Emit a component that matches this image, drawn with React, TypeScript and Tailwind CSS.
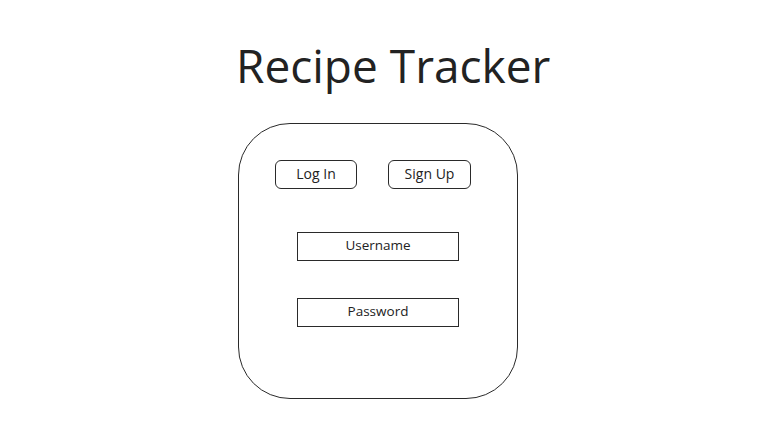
import React from "react";

export default function App() {
  return (
    <div className="w-[772px] h-[435px] bg-white flex flex-col items-start font-['Open_Sans',sans-serif] text-[#222]">
      <h1 className="ml-[236px] mt-[42px] text-[46px] leading-none font-normal">Recipe Tracker</h1>

      <div className="ml-[238px] mt-[35px] w-[280px] h-[276px] border border-[#2a2a2a] rounded-[52px] flex flex-col">
        <div className="flex mt-[36px] ml-[36px] gap-[31px]">
          <button className="w-[82px] h-[29px] pb-[1px] border border-[#2a2a2a] rounded-[6px] text-[14px] leading-none">
            Log In
          </button>
          <button className="w-[83px] h-[29px] pb-[1px] border border-[#2a2a2a] rounded-[6px] text-[14px] leading-none">
            Sign Up
          </button>
        </div>

        <div className="ml-[58px] mt-[43px] w-[162px] h-[29px] pb-[3px] border border-[#2a2a2a] flex items-center justify-center text-[13.5px]">
          Username
        </div>
        <div className="ml-[58px] mt-[37px] w-[162px] h-[29px] pb-[3px] border border-[#2a2a2a] flex items-center justify-center text-[13.5px]">
          Password
        </div>
      </div>
    </div>
  );
}
